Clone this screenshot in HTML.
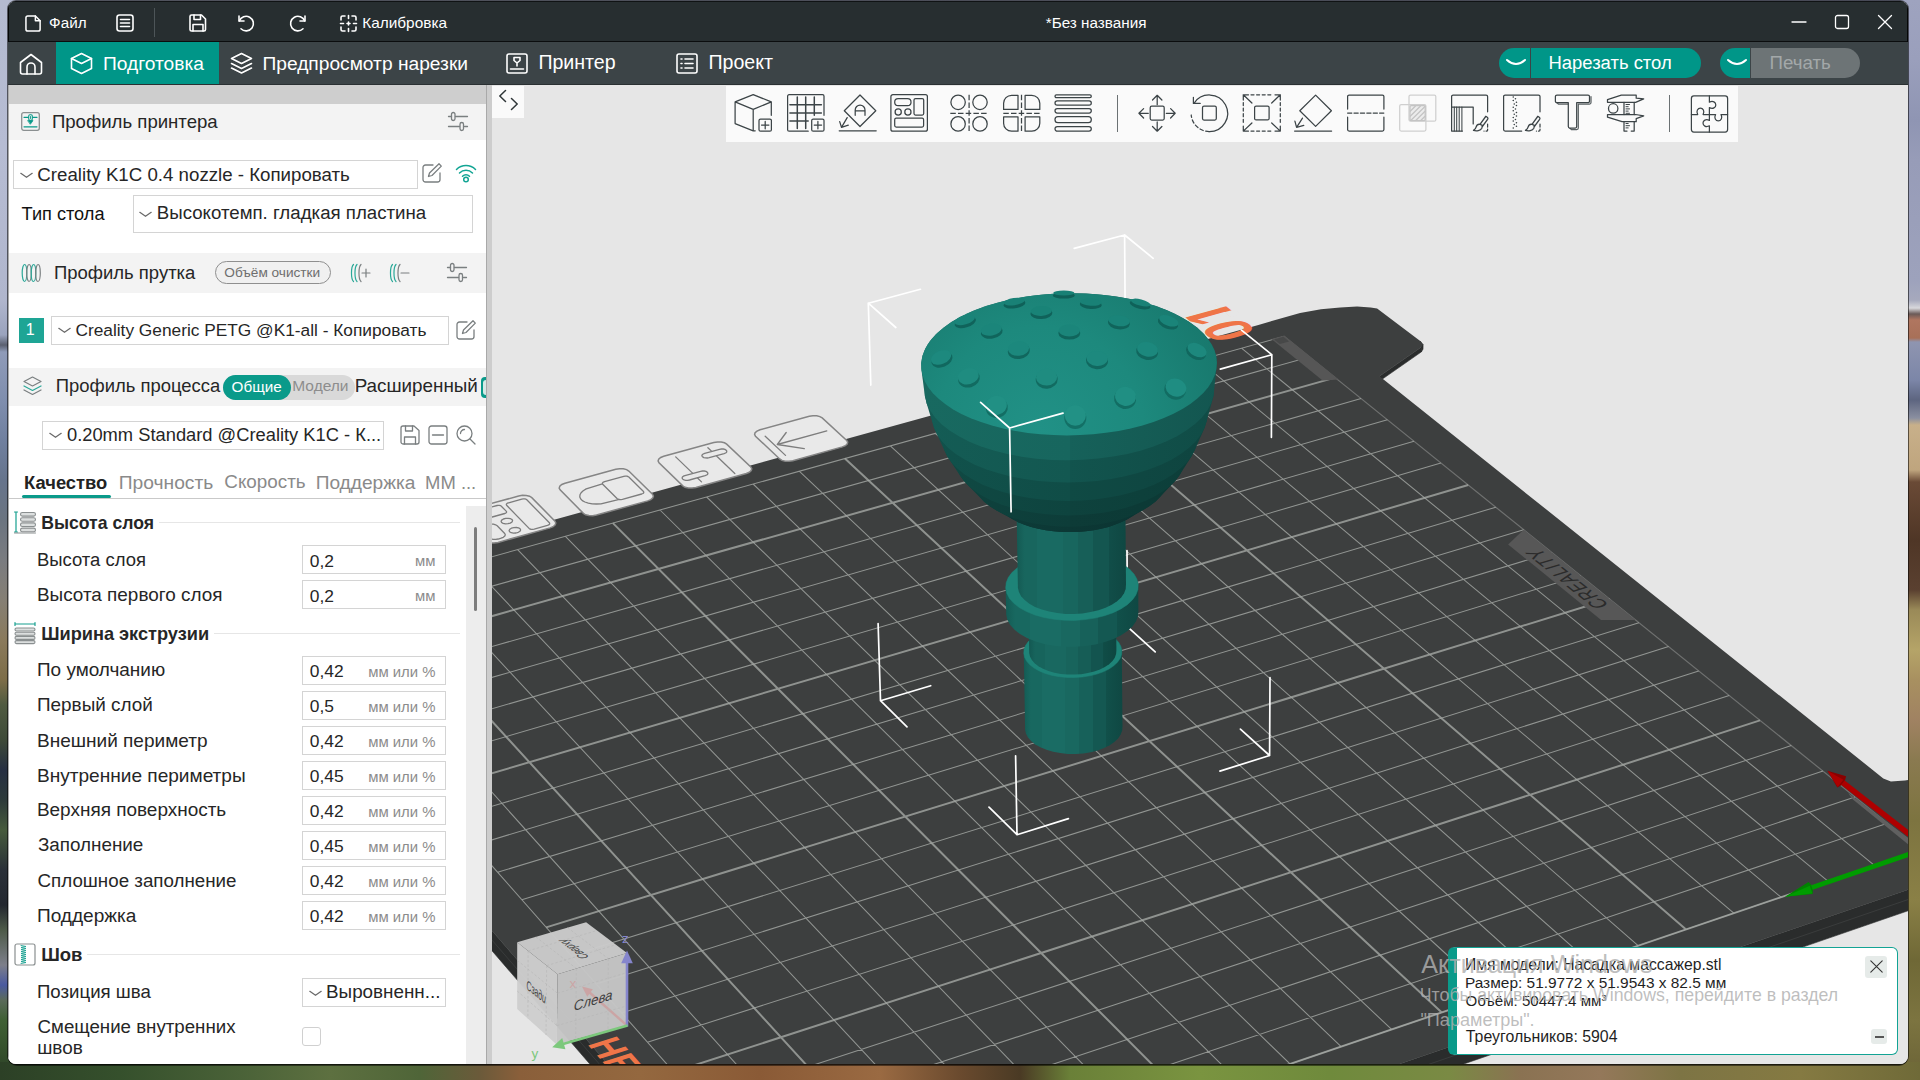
<!DOCTYPE html>
<html lang="ru"><head><meta charset="utf-8"><title>Creality Print</title>
<style>
*{box-sizing:border-box;margin:0;padding:0}
html,body{width:1920px;height:1080px;overflow:hidden}
body{font-family:"Liberation Sans",sans-serif;position:relative;background:#6b6a4a;color:#222}
.abs{position:absolute}
.t{position:absolute;white-space:nowrap;line-height:1}

#scene{position:absolute;left:484px;top:84px;width:1416px;height:979px;overflow:hidden;background:#e6e6e6}
#scene svg.main{position:absolute;left:0;top:0}

#tool{position:absolute;left:234px;top:1px;width:1012px;height:56px;background:#fafafa}
#tool svg{position:absolute;top:7.6px;overflow:visible}
#tool svg *{fill:none;stroke:#3c4447;stroke-width:1.25;stroke-linecap:round;stroke-linejoin:round;vector-effect:none}
#tool .sep{position:absolute;top:9px;width:1px;height:37px;background:#6b7173}
#info{position:absolute;left:956px;top:861.500px;width:450px;height:108px;background:#fff;border:1.5px solid #12a394;border-left:9.500px solid #0a9a8a;border-radius:6px}
#info .t{color:#1f1f1f}
#wm .t{color:rgba(176,176,176,.82)}

#panel{position:absolute;left:0;top:84px;width:478px;height:979px;background:#fff;overflow:hidden}
#panel .t{color:#262626}
.hdr{position:absolute;left:0;width:478px;background:#f3f3f3}
.box{position:absolute;border:1px solid #d4d4d4;background:#fff}
.ic.g *{fill:none;stroke:#7a7f80;stroke-width:1.300;stroke-linecap:round;stroke-linejoin:round}
.ic.k *{fill:none;stroke:#3c4447;stroke-width:1.200;stroke-linecap:round;stroke-linejoin:round}

#win{position:absolute;left:8px;top:1px;width:1900px;height:1063px;border-radius:8px;overflow:hidden;background:#e6e6e6;box-shadow:0 0 0 1px rgba(0,0,0,.55)}
#title{position:absolute;left:0;top:0;width:1900px;height:41px;background:#272e30;border-bottom:1px solid #0b0d0e;border-top:1px solid #101314}
#tabs{position:absolute;left:0;top:41px;width:1900px;height:43px;background:#3c4447;border-bottom:1px solid #2a3032}
.ic{position:absolute;overflow:visible}
.ic *{fill:none;stroke:#fff;stroke-width:1.6;stroke-linecap:round;stroke-linejoin:round}

</style></head><body>

<div class="abs" style="left:0;top:0;width:1920px;height:1080px;background:linear-gradient(90deg,#2c4026 0px,#35502c 120px,#4a6238 240px,#5d7040 330px,#4f6538 420px,#6b5a3a 480px,#8a5f3a 520px,#94683f 640px,#8a5a36 760px,#9a6a42 880px,#6a4a2e 960px,#4a3a24 1020px,#6a8038 1070px,#7a9440 1200px,#6f8a3c 1330px,#7a8a44 1450px,#8a7252 1520px,#94785a 1600px,#7d7444 1680px,#857a42 1800px,#6f6a38 1920px)"></div>
<div class="abs" style="left:0;top:0;width:1920px;height:24px;background:linear-gradient(90deg,#b4bad0 0,#a9aec6 50%,#9ea3bf 100%)"></div>
<div class="abs" style="left:0;top:0;width:30px;height:1080px;background:linear-gradient(180deg,#b4bad0 0px,#b6bcd3 150px,#b0b6cd 300px,#9aa3bd 335px,#5a6070 345px,#8f9bb8 352px,#7f8eae 400px,#70809f 440px,#66748c 480px,#6b7480 520px,#7a7c80 560px,#857f74 600px,#8a7a5c 640px,#7d6d48 680px,#4f5a40 705px,#3e4a38 740px,#262f42 770px,#2d3a3a 800px,#465a3c 830px,#2a3038 870px,#23272f 905px,#4d5a48 930px,#7d7f8a 965px,#4a5aa0 985px,#5a6a5a 1000px,#3f6034 1020px,#35502c 1050px,#2a3d26 1080px)"></div>
<div class="abs" style="left:1890px;top:0;width:30px;height:1080px;background:linear-gradient(180deg,#9ea3bf 0px,#9a9fbc 60px,#8f95b3 120px,#979cb8 160px,#9da2bc 280px,#a6a9bd 300px,#d8d8dc 308px,#6a5a58 314px,#b07660 320px,#a87058 338px,#8f95b0 342px,#7c86a8 380px,#5d6580 400px,#8a8fa0 418px,#c8b08a 425px,#bfa57e 470px,#6a4a36 482px,#4f3626 540px,#5a4030 590px,#9a8a58 610px,#b5a468 650px,#a89060 680px,#a08262 720px,#8a7a50 760px,#7d7440 820px,#8a8046 900px,#6f6836 960px,#7c7440 1020px,#6a6236 1080px)"></div>
<div class="abs" style="left:0;top:1062px;width:1920px;height:18px;background:linear-gradient(90deg,#2c4026 0px,#35502c 120px,#4a6238 240px,#5d7040 330px,#4f6538 420px,#6b5a3a 480px,#8a5f3a 520px,#94683f 640px,#8a5a36 760px,#9a6a42 880px,#6a4a2e 960px,#4a3a24 1020px,#6a8038 1070px,#7a9440 1200px,#6f8a3c 1330px,#7a8a44 1450px,#8a7252 1520px,#94785a 1600px,#7d7444 1680px,#857a42 1800px,#6f6a38 1920px)"></div>
<div class="abs" style="left:8px;top:1056px;width:1900px;height:10px;background:rgba(0,0,0,.5);border-radius:0 0 9px 9px"></div>

<div id="win">
<div id="title">
<div class="abs" style="left:0;top:0;width:1px;height:41px;background:#050606"></div><div class="abs" style="left:1899px;top:0;width:1px;height:41px;background:#050606"></div>
<svg class="ic" style="left:16.7px;top:12.5px" width="17" height="17" viewBox="0 0 18 18"><path d="M3 1h8l5 5v9a2 2 0 0 1-2 2H3a2 2 0 0 1-2-2V3a2 2 0 0 1 2-2z"/><path d="M11 1v5h5"/></svg>
<div class="t" style="top:12.71px;font-size:15.23px;left:41.12px;color:#fff;">Файл</div>
<svg class="ic" style="left:108px;top:12px" width="18" height="18" viewBox="0 0 18 18"><rect x="1" y="1" width="16" height="16" rx="2.5"/><path d="M4.5 5.5h9M4.5 9h9M4.5 12.5h9"/></svg>
<div class="abs" style="left:145.5px;top:6px;width:1px;height:29px;background:#4d5558"></div>
<svg class="ic" style="left:181px;top:12px" width="18" height="18" viewBox="0 0 18 18"><path d="M2.5 1h10l4 4v10.5a1.5 1.5 0 0 1-1.500 1.500H2.500A1.500 1.500 0 0 1 1 15.500V2.500A1.500 1.500 0 0 1 2.500 1z"/><path d="M5 1v4.500h6.500V1M4 17v-6.500h10V17"/></svg>
<svg class="ic" style="left:229px;top:12px" width="19" height="18" viewBox="0 0 19 18"><path d="M2 2v5h5"/><path d="M2.300 7A7.300 7.300 0 1 1 4 14.800"/></svg>
<svg class="ic" style="left:280px;top:12px" width="19" height="18" viewBox="0 0 19 18"><path d="M17 2v5h-5"/><path d="M16.700 7A7.300 7.300 0 1 0 15 14.800"/></svg>
<svg class="ic" style="left:332px;top:13px" width="17" height="17" viewBox="0 0 17 17"><path d="M1 5V2.500A1.500 1.500 0 0 1 2.500 1H5M12 1h2.500A1.500 1.500 0 0 1 16 2.500V5M16 12v2.500a1.500 1.500 0 0 1-1.500 1.500H12M5 16H2.500A1.500 1.500 0 0 1 1 14.500V12M8.500 .5v3M8.500 13.500v3M.5 8.500h3M13.500 8.500h3M8.500 7v3M7 8.500h3"/></svg>
<div class="t" style="top:12.58px;font-size:15.38px;left:354.24px;color:#fff;">Калибровка</div>
<div class="t" style="top:12.69px;font-size:15.25px;left:1037.75px;color:#fff;">*Без названия</div>
<svg class="ic" style="left:1782.5px;top:12.3px" width="16" height="16" viewBox="0 0 16 16"><path d="M1 8h14" style="stroke-width:1.300"/></svg>
<svg class="ic" style="left:1825.5px;top:12.3px" width="16" height="16" viewBox="0 0 16 16"><rect x="1.500" y="1.500" width="13" height="13" rx="2" style="stroke-width:1.300"/></svg>
<svg class="ic" style="left:1868.5px;top:12.3px" width="16" height="16" viewBox="0 0 16 16"><path d="M1.500 1.500l13 13M14.500 1.500l-13 13" style="stroke-width:1.300"/></svg>
</div>
<div id="tabs">
<div class="abs" style="left:48px;top:0;width:163px;height:42px;background:#009688"></div>
<svg class="ic" style="left:11px;top:11px" width="24" height="22" viewBox="0 0 24 22"><path d="M1.500 9.500L12 1.500l10.500 8V19a2 2 0 0 1-2 2H3.500a2 2 0 0 1-2-2z"/><path d="M8 21v-7a4 4 0 0 1 8 0v7" /></svg>
<svg class="ic" style="left:62px;top:10px" width="23" height="23" viewBox="0 0 23 23"><path d="M11.500 1.500L21.500 6.500v10L11.500 21.500 1.500 16.500v-10z"/><path d="M1.500 6.500l10 5 10-5"/></svg>
<div class="t" style="top:11.76px;font-size:19.19px;left:94.94px;color:#fff;">Подготовка</div>
<svg class="ic" style="left:222px;top:10px" width="23" height="23" viewBox="0 0 23 23"><path d="M11.500 1.500L21.500 6.500 11.500 11.500 1.500 6.500z"/><path d="M1.500 11.500l10 5 10-5M1.500 16l10 5 10-5"/></svg>
<div class="t" style="top:11.76px;font-size:19.19px;left:254.44px;color:#fff;">Предпросмотр нарезки</div>
<svg class="ic" style="left:498px;top:11px" width="22" height="21" viewBox="0 0 22 21"><rect x="1" y="1" width="20" height="19" rx="2"/><path d="M8 4.500h6v3l-3 2.500-3-2.500zM11 10v3M4.500 16h13"/></svg>
<div class="t" style="top:11.43px;font-size:19.57px;left:530.41px;color:#fff;">Принтер</div>
<svg class="ic" style="left:668px;top:11px" width="22" height="21" viewBox="0 0 22 21"><rect x="1" y="1" width="20" height="19" rx="2"/><path d="M5 6h1M9 6h8M5 10.500h1M9 10.500h8M5 15h1M9 15h8"/></svg>
<div class="t" style="top:11.38px;font-size:19.63px;left:700.41px;color:#fff;">Проект</div>
<div class="abs" style="left:1491px;top:6px;width:31px;height:30px;background:#009688;border-radius:15px 0 0 15px"></div>
<div class="abs" style="left:1523px;top:6px;width:170px;height:30px;background:#009688;border-radius:0 15px 15px 0"></div>
<svg class="ic" style="left:1498px;top:16px" width="20" height="10" viewBox="0 0 20 10"><path d="M1 2Q10 10 19 2" style="stroke-width:2"/></svg>
<div class="t" style="top:11.87px;font-size:18.46px;left:1540.49px;color:#fff;">Нарезать стол</div>
<div class="abs" style="left:1712px;top:6px;width:30px;height:30px;background:#009688;border-radius:15px 0 0 15px"></div>
<div class="abs" style="left:1743px;top:6px;width:109px;height:30px;background:#6d7476;border-radius:0 15px 15px 0"></div>
<svg class="ic" style="left:1719px;top:16px" width="20" height="10" viewBox="0 0 20 10"><path d="M1 2Q10 10 19 2" style="stroke-width:2"/></svg>
<div class="t" style="top:11.67px;font-size:18.7px;left:1761.48px;color:#a3a8a9;">Печать</div>
</div>
<div id="panel">
<div class="abs" style="left:0;top:0;width:1px;height:979px;background:#a9a9a9;z-index:3"></div>
<div class="abs" style="left:0;top:0;width:478px;height:19px;background:#cecece"></div>
<div class="hdr" style="top:19px;height:36px"></div>
<svg class="ic" style="left:13.399999999999999px;top:26.799999999999997px" width="19" height="19" viewBox="0 0 19 19"><rect x=".7" y=".7" width="17.600" height="17.600" rx="2" style="stroke:#8a8f90;stroke-width:1.300"/><path d="M3 5.300h13M3 14.800h13" style="stroke:#0a9a8a;stroke-width:1.200"/><rect x="7.700" y="2.700" width="3.600" height="5.600" rx="1.200" style="stroke:#0a9a8a;stroke-width:1.100;fill:#f3f3f3"/><path d="M7 8.600h5l-2.500 3.400z" style="stroke:#0a9a8a;stroke-width:.8;fill:#0a9a8a"/><path d="M9.500 4.500v2" style="stroke:#0a9a8a;stroke-width:.9"/></svg>
<div class="t" style="top:27.56px;font-size:18.6px;left:43.89px;">Профиль принтера</div>
<svg class="ic g" style="left:440px;top:26px" width="20" height="21" viewBox="0 0 20 21"><path d="M.5 5.500h3M7.500 5.500h12M.5 15.500h11M16.500 15.500h3"/><rect x="3.500" y="1.500" width="3.500" height="8" rx="1.750"/><rect x="12" y="11.500" width="3.500" height="8" rx="1.750"/></svg>
<div class="box" style="left:5px;top:75px;width:405px;height:29px"></div>
<svg class="ic" style="left:12px;top:87px" width="13" height="7" viewBox="0 0 13 7"><path d="M.8 1.300L6.500 5.300 12.200 1.300" style="stroke:#6a6a6a;stroke-width:1.250"/></svg>
<div class="t" style="top:80.85px;font-size:18.72px;left:29.35px;">Creality K1C 0.4 nozzle - Копировать</div>
<svg class="ic g" style="left:414px;top:78px" width="20" height="20" viewBox="0 0 20 20"><path d="M11 2H3.500A2.500 2.500 0 0 0 1 4.500v12A2.500 2.500 0 0 0 3.500 19h12a2.500 2.500 0 0 0 2.500-2.500V10"/><path d="M6.500 13.500l1-3.500L17 .8l2.300 2.300-9.300 9.400z"/></svg>
<svg class="ic" style="left:447px;top:78px" width="22" height="20" viewBox="0 0 22 20"><path d="M1.500 6.500a13.500 13.500 0 0 1 19 0M4.500 10a9.300 9.300 0 0 1 13 0M7.500 13.300a5 5 0 0 1 7 0" style="stroke:#12a594;stroke-width:1.500"/><circle cx="11" cy="16.500" r="2.300" style="stroke:#12a594;stroke-width:1.500"/></svg>
<div class="t" style="top:119.81px;font-size:18.18px;left:13.59px;color:#111;">Тип стола</div>
<div class="box" style="left:125px;top:110px;width:340px;height:38px"></div>
<svg class="ic" style="left:131px;top:126px" width="13" height="7" viewBox="0 0 13 7"><path d="M.8 1.300L6.500 5.300 12.200 1.300" style="stroke:#6a6a6a;stroke-width:1.250"/></svg>
<div class="t" style="top:119.39px;font-size:18.68px;left:148.77px;">Высокотемп. гладкая пластина</div>
<div class="hdr" style="top:168px;height:40px"></div>
<svg class="ic" style="left:13px;top:178px" width="20" height="20" viewBox="0 0 20 20"><ellipse cx="3.500" cy="10" rx="2.300" ry="8.500" style="stroke:#2aa898;stroke-width:1.200"/><ellipse cx="8" cy="10" rx="2.300" ry="8.500" style="stroke:#7a7f80;stroke-width:1.200"/><ellipse cx="12.500" cy="10" rx="2.300" ry="8.500" style="stroke:#2aa898;stroke-width:1.200"/><ellipse cx="17" cy="10" rx="2.300" ry="8.500" style="stroke:#7a7f80;stroke-width:1.200"/></svg>
<div class="t" style="top:178.66px;font-size:18.48px;left:46.00px;">Профиль прутка</div>
<div class="abs" style="left:207px;top:176px;width:116px;height:23px;border:1px solid #8f8f8f;border-radius:12px;background:#f0f0f0"></div>
<div class="t" style="top:180.66px;font-size:13.63px;left:216.35px;color:#6e6e6e;">Объём очистки</div>
<svg class="ic" style="left:342px;top:178px" width="21" height="20" viewBox="0 0 21 20"><path d="M3.500 1.500C.8 4 .8 16 3.500 18.500M7 1.500C4.300 4 4.300 16 7 18.500" style="stroke:#2aa898;stroke-width:1.200"/><path d="M11 1.500C8.300 4 8.300 16 11 18.500M12 10h8M16 6v8" style="stroke:#7a7f80;stroke-width:1.200"/></svg>
<svg class="ic" style="left:381px;top:178px" width="21" height="20" viewBox="0 0 21 20"><path d="M3.500 1.500C.8 4 .8 16 3.500 18.500M7 1.500C4.300 4 4.300 16 7 18.500" style="stroke:#2aa898;stroke-width:1.200"/><path d="M11 1.500C8.300 4 8.300 16 11 18.500M12 10h8" style="stroke:#7a7f80;stroke-width:1.200"/></svg>
<svg class="ic g" style="left:439px;top:177px" width="20" height="21" viewBox="0 0 20 21"><path d="M.5 5.500h3M7.500 5.500h12M.5 15.500h11M16.500 15.500h3"/><rect x="3.500" y="1.500" width="3.500" height="8" rx="1.750"/><rect x="12" y="11.500" width="3.500" height="8" rx="1.750"/></svg>
<div class="abs" style="left:11px;top:233px;width:25px;height:25px;background:#1ea595"></div>
<div class="t" style="top:237.46px;font-size:16px;left:17.78px;color:#fff;">1</div>
<div class="box" style="left:43px;top:231px;width:398px;height:29px"></div>
<svg class="ic" style="left:50px;top:242px" width="13" height="7" viewBox="0 0 13 7"><path d="M.8 1.300L6.500 5.300 12.200 1.300" style="stroke:#6a6a6a;stroke-width:1.250"/></svg>
<div class="t" style="top:236.75px;font-size:17.31px;left:67.42px;">Creality Generic PETG @K1-all - Копировать</div>
<svg class="ic g" style="left:447.5px;top:235px" width="20" height="20" viewBox="0 0 20 20"><path d="M11 2H3.500A2.500 2.500 0 0 0 1 4.500v12A2.500 2.500 0 0 0 3.500 19h12a2.500 2.500 0 0 0 2.500-2.500V10"/><path d="M6.500 13.500l1-3.500L17 .8l2.300 2.300-9.300 9.400z"/></svg>
<div class="hdr" style="top:283px;height:38px"></div>
<svg class="ic" style="left:15px;top:291px" width="19" height="20" viewBox="0 0 19 20"><path d="M9.500 1L18 5.500 9.500 10 1 5.500z" style="stroke:#7a7f80;stroke-width:1.200"/><path d="M1 10l8.500 4.500L18 10" style="stroke:#2aa898;stroke-width:1.200"/><path d="M1 14l8.500 4.500L18 14" style="stroke:#7a7f80;stroke-width:1.200"/></svg>
<div class="t" style="top:292.27px;font-size:18.47px;left:47.80px;">Профиль процесса</div>
<div class="abs" style="left:215px;top:289.5px;width:132px;height:25px;border-radius:12.500px;background:#d9d9d9"></div>
<div class="abs" style="left:215px;top:289.5px;width:68px;height:25px;border-radius:12.500px;background:#0a9a8a"></div>
<div class="t" style="top:293.70px;font-size:15.24px;left:223.58px;color:#fff;">Общие</div>
<div class="t" style="top:293.45px;font-size:15.54px;left:284.23px;color:#8d8d8d;">Модели</div>
<div class="t" style="top:291.96px;font-size:18.83px;left:346.66px;">Расширенный</div>
<div class="abs" style="left:473px;top:292px;width:30px;height:21px;border-radius:4px;background:#0a9a8a"></div>
<div class="abs" style="left:475px;top:295px;width:10px;height:15px;border-radius:3px;background:#d5e9e6"></div>
<div class="box" style="left:34px;top:336px;width:342px;height:29px"></div>
<svg class="ic" style="left:41px;top:347px" width="13" height="7" viewBox="0 0 13 7"><path d="M.8 1.300L6.500 5.300 12.200 1.300" style="stroke:#6a6a6a;stroke-width:1.250"/></svg>
<div class="t" style="top:341.09px;font-size:18.32px;left:58.98px;">0.20mm Standard @Creality K1C - К...</div>
<svg class="ic g" style="left:391.5px;top:339.5px" width="20" height="20" viewBox="0 0 20 20"><path d="M3 1h11l5 4.500V17a2 2 0 0 1-2 2H3a2 2 0 0 1-2-2V3a2 2 0 0 1 2-2z"/><path d="M5.500 1v5h7V1M4.500 19v-7h11v7"/></svg>
<svg class="ic g" style="left:419.5px;top:339.5px" width="20" height="20" viewBox="0 0 20 20"><rect x="1" y="1" width="18" height="18" rx="2.500"/><path d="M4.500 10h11"/></svg>
<svg class="ic g" style="left:448px;top:339.5px" width="20" height="20" viewBox="0 0 20 20"><circle cx="8.500" cy="8.500" r="7.500"/><path d="M14 14l5 5"/><path d="M4.500 8.500a4 4 0 0 1 4-4"/></svg>
<div class="t" style="top:388.67px;font-size:18.35px;left:16.07px;font-weight:bold;color:#222;">Качество</div>
<div class="t" style="top:387.91px;font-size:19.24px;left:110.74px;color:#8a8a8a;">Прочность</div>
<div class="t" style="top:388.25px;font-size:18.84px;left:216.34px;color:#8a8a8a;">Скорость</div>
<div class="t" style="top:388.01px;font-size:19.12px;left:307.65px;color:#8a8a8a;">Поддержка</div>
<div class="t" style="top:388.60px;font-size:18.43px;left:417.09px;color:#8a8a8a;">ММ ...</div>
<div class="abs" style="left:0;top:413px;width:478px;height:1px;background:#c9c9c9"></div>
<div class="abs" style="left:14px;top:410px;width:89px;height:3px;border-radius:1.500px;background:#0a9a8a"></div>
<div class="abs" style="left:458px;top:420.5px;width:20px;height:560px;background:#ededed"></div>
<div class="abs" style="left:466px;top:442px;width:3px;height:84px;border-radius:1.500px;background:#7d7d7d"></div>
<div class="t" style="top:429.79px;font-size:17.61px;left:33.22px;font-weight:bold;">Высота слоя</div><div class="abs" style="left:151px;top:437.29999999999995px;width:301px;height:1px;background:#e6e6e6"></div><svg class="ic" style="left:6px;top:426.29999999999995px" width="22" height="23" viewBox="0 0 22 23"><rect x="6.500" y="1.5" width="15" height="3.600" rx="1.800" style="stroke:#8a8f90;stroke-width:1.100;fill:#dcdfdf"/><rect x="6.500" y="6.7" width="15" height="3.600" rx="1.800" style="stroke:#8a8f90;stroke-width:1.100;fill:#dcdfdf"/><rect x="6.500" y="11.9" width="15" height="3.600" rx="1.800" style="stroke:#8a8f90;stroke-width:1.100;fill:#dcdfdf"/><rect x="6.500" y="17.1" width="15" height="3.600" rx="1.800" style="stroke:#8a8f90;stroke-width:1.100;fill:#dcdfdf"/><path d="M2 1v20M.5 1h3M.5 21h3" style="stroke:#17a090;stroke-width:1.200"/><path d="M.5 22h21" style="stroke:#8a8f90;stroke-width:1"/></svg>
<div class="t" style="top:539.99px;font-size:18.21px;left:33.18px;font-weight:bold;">Ширина экструзии</div><div class="abs" style="left:206px;top:548px;width:246px;height:1px;background:#e6e6e6"></div><svg class="ic" style="left:6px;top:537px" width="22" height="23" viewBox="0 0 22 23"><rect x="1" y="6.0" width="20" height="3" rx="1.500" style="stroke:#8a8f90;stroke-width:1.100;fill:#dcdfdf"/><rect x="1" y="10.2" width="20" height="3" rx="1.500" style="stroke:#8a8f90;stroke-width:1.100;fill:#dcdfdf"/><rect x="1" y="14.4" width="20" height="3" rx="1.500" style="stroke:#8a8f90;stroke-width:1.100;fill:#dcdfdf"/><rect x="1" y="18.6" width="20" height="3" rx="1.500" style="stroke:#8a8f90;stroke-width:1.100;fill:#dcdfdf"/><path d="M1 2h20M1 .5v3M21 .5v3" style="stroke:#17a090;stroke-width:1.200"/></svg>
<div class="t" style="top:860.74px;font-size:18.5px;left:33.16px;font-weight:bold;">Шов</div><div class="abs" style="left:79px;top:869px;width:373px;height:1px;background:#e6e6e6"></div><svg class="ic" style="left:6px;top:858px" width="22" height="23" viewBox="0 0 22 23"><rect x="1" y="1" width="20" height="21" rx="2" style="stroke:#8a8f90;stroke-width:1.200"/><path d="M7 2.500l5 1l-5 1l5 1l-5 1l5 1l-5 1l5 1l-5 1l5 1l-5 1l5 1l-5 1l5 1l-5 1l5 1l-5 1l5 1l-5 1" style="stroke:#17a090;stroke-width:.9;stroke-linejoin:miter"/></svg>
<div class="t" style="top:466.06px;font-size:18.48px;left:28.98px;">Высота слоя</div><div class="box" style="left:294px;top:460.20000000000005px;width:144px;height:29px"></div><div class="t" style="top:467.57px;font-size:17.4px;left:301.72px;">0,2</div><div class="t" style="top:469.09px;font-size:14.9px;right:50.5px;color:#8c8c8c;">мм</div>
<div class="t" style="top:500.68px;font-size:18.92px;left:28.95px;">Высота первого слоя</div><div class="box" style="left:294px;top:495.20000000000005px;width:144px;height:29px"></div><div class="t" style="top:502.57px;font-size:17.4px;left:301.72px;">0,2</div><div class="t" style="top:504.09px;font-size:14.9px;right:50.5px;color:#8c8c8c;">мм</div>
<div class="t" style="top:576.34px;font-size:18.97px;left:28.96px;">По умолчанию</div><div class="box" style="left:294px;top:570.9px;width:144px;height:29px"></div><div class="t" style="top:578.27px;font-size:17.4px;left:301.72px;">0,42</div><div class="t" style="top:579.79px;font-size:14.9px;right:50.5px;color:#8c8c8c;">мм или %</div>
<div class="t" style="top:611.39px;font-size:18.91px;left:28.97px;">Первый слой</div><div class="box" style="left:294px;top:605.9px;width:144px;height:29px"></div><div class="t" style="top:613.27px;font-size:17.4px;left:301.72px;">0,5</div><div class="t" style="top:614.79px;font-size:14.9px;right:50.5px;color:#8c8c8c;">мм или %</div>
<div class="t" style="top:646.27px;font-size:19.05px;left:28.94px;">Внешний периметр</div><div class="box" style="left:294px;top:640.9px;width:144px;height:29px"></div><div class="t" style="top:648.27px;font-size:17.4px;left:301.72px;">0,42</div><div class="t" style="top:649.79px;font-size:14.9px;right:50.5px;color:#8c8c8c;">мм или %</div>
<div class="t" style="top:681.25px;font-size:19.08px;left:28.93px;">Внутренние периметры</div><div class="box" style="left:294px;top:675.9px;width:144px;height:29px"></div><div class="t" style="top:683.27px;font-size:17.4px;left:301.72px;">0,45</div><div class="t" style="top:684.79px;font-size:14.9px;right:50.5px;color:#8c8c8c;">мм или %</div>
<div class="t" style="top:716.34px;font-size:18.97px;left:28.94px;">Верхняя поверхность</div><div class="box" style="left:294px;top:710.9px;width:144px;height:29px"></div><div class="t" style="top:718.27px;font-size:17.4px;left:301.72px;">0,42</div><div class="t" style="top:719.79px;font-size:14.9px;right:50.5px;color:#8c8c8c;">мм или %</div>
<div class="t" style="top:751.44px;font-size:18.85px;left:29.88px;">Заполнение</div><div class="box" style="left:294px;top:745.9px;width:144px;height:29px"></div><div class="t" style="top:753.27px;font-size:17.4px;left:301.72px;">0,45</div><div class="t" style="top:754.79px;font-size:14.9px;right:50.5px;color:#8c8c8c;">мм или %</div>
<div class="t" style="top:786.52px;font-size:18.76px;left:29.55px;">Сплошное заполнение</div><div class="box" style="left:294px;top:780.9px;width:144px;height:29px"></div><div class="t" style="top:788.27px;font-size:17.4px;left:301.72px;">0,42</div><div class="t" style="top:789.79px;font-size:14.9px;right:50.5px;color:#8c8c8c;">мм или %</div>
<div class="t" style="top:821.27px;font-size:19.06px;left:28.96px;">Поддержка</div><div class="box" style="left:294px;top:815.9px;width:144px;height:29px"></div><div class="t" style="top:823.27px;font-size:17.4px;left:301.72px;">0,42</div><div class="t" style="top:824.79px;font-size:14.9px;right:50.5px;color:#8c8c8c;">мм или %</div>
<div class="t" style="top:897.92px;font-size:18.64px;left:28.99px;">Позиция шва</div>
<div class="box" style="left:294px;top:892.5px;width:144px;height:29px"></div>
<svg class="ic" style="left:300.5px;top:904.5px" width="13" height="7" viewBox="0 0 13 7"><path d="M.8 1.300L6.500 5.300 12.200 1.300" style="stroke:#6a6a6a;stroke-width:1.250"/></svg>
<div class="t" style="top:897.75px;font-size:18.84px;left:318.05px;">Выровненн...</div>
<div class="t" style="top:933.15px;font-size:18.72px;left:29.55px;">Смещение внутренних</div>
<div class="t" style="top:954.18px;font-size:18.93px;left:29.19px;">швов</div>
<div class="abs" style="left:294px;top:941.5px;width:19px;height:19px;border:1px solid #d0d0d0;border-radius:3px;background:#fff"></div>
</div>
<div class="abs" style="left:478px;top:84px;width:1px;height:979px;background:#a9a9a9"></div>
<div class="abs" style="left:479px;top:84px;width:5px;height:979px;background:#cdcdcd"></div>
<div id="scene"><svg class="main" width="1416" height="979" viewBox="492 85 1416 979"><polygon points="1420.2,341.0 1422.9,344.4 1422.8,349.2 1420.1,345.8" fill="#2a2c2c" stroke="#2a2c2c" stroke-width="0.6"/>
<polygon points="1422.9,344.4 1421.6,347.0 1421.5,351.8 1422.8,349.2" fill="#2a2c2c" stroke="#2a2c2c" stroke-width="0.6"/>
<polygon points="1421.6,347.0 1379.5,376.3 1379.5,381.1 1421.5,351.8" fill="#2a2c2c" stroke="#2a2c2c" stroke-width="0.6"/>
<polygon points="2043.0,830.8 2038.3,845.0 2037.9,850.3 2042.6,836.1" fill="#2a2c2c" stroke="#2a2c2c" stroke-width="0.6"/>
<polygon points="2038.3,845.0 789.4,1273.3 790.4,1296.2 2036.7,866.4" fill="#2a2c2c" stroke="#2a2c2c" stroke-width="0.6"/>
<polygon points="789.4,1273.3 216.3,613.2 218.2,633.9 790.4,1296.2" fill="#2a2c2c" stroke="#2a2c2c" stroke-width="0.6"/>
<polygon points="216.3,613.2 1258.4,324.9 1300.1,312.9 1321.0,309.2 1340.2,307.5 1357.1,306.6 1370.6,307.4 1377.1,308.6 1420.2,341.0 1422.9,344.4 1421.6,347.0 1379.5,376.3 1883.3,778.4 1890.9,781.4 1905.0,780.4 1966.5,770.8 2043.0,830.8 2038.3,845.0 789.4,1273.3" fill="#3d3f3f"/>
<path d="M2037.6,855.0 L789.9,1284.0 M789.9,1284.0 L217.2,622.9" stroke="#3a3c3c" stroke-width="1" fill="none"/>
<path d="M1920.5,849.8 L1284.0,336.4" stroke="#6f7170" stroke-width="1.2" fill="none"/>
<path d="M1920.5,849.8 L810.4,1226.9 M1887.5,823.2 L782.3,1195.0 M1874.4,865.4 L1241.5,348.2 M1855.0,797.0 L754.6,1163.6 M1827.9,881.2 L1198.7,360.1 M1823.0,771.1 L727.2,1132.6 M1781.0,897.2 L1155.6,372.1 M1791.3,745.6 L700.3,1102.0 M1733.8,913.2 L1112.2,384.2 M1729.2,695.5 L647.5,1042.2 M1638.1,945.7 L1024.4,408.6 M1698.7,670.9 L621.6,1012.9 M1589.6,962.2 L980.0,420.9 M1668.6,646.6 L596.2,984.0 M1540.8,978.8 L935.3,433.4 M1638.9,622.7 L571.0,955.5 M1491.5,995.5 L890.3,445.9 M1580.6,575.6 L521.8,899.7 M1391.6,1029.4 L799.2,471.2 M1552.0,552.5 L497.6,872.3 M1341.1,1046.6 L753.1,484.0 M1523.7,529.7 L473.8,845.3 M1290.1,1064.0 L706.7,497.0 M1495.8,507.2 L450.3,818.7 M1238.6,1081.4 L660.0,510.0 M1440.9,463.0 L404.3,766.4 M1134.4,1116.8 L565.4,536.3 M1414.0,441.2 L381.7,740.8 M1081.6,1134.8 L517.6,549.6 M1387.4,419.8 L359.4,715.5 M1028.3,1152.9 L469.4,563.0 M1361.1,398.6 L337.4,690.6 M974.6,1171.1 L420.9,576.5 M1309.4,356.9 L294.2,641.6 M865.6,1208.2 L322.7,603.8 M1284.0,336.4 L273.0,617.6 M810.4,1226.9 L273.0,617.6" stroke="#a4a7a4" stroke-width="1.05" fill="none" opacity=".82"/>
<path d="M1760.0,720.4 L673.7,1071.9 M1686.1,929.4 L1068.4,396.3 M1609.6,599.0 L546.2,927.4 M1441.8,1012.4 L844.9,458.5 M1468.2,485.0 L427.1,792.4 M1186.7,1099.1 L612.9,523.1 M1335.1,377.6 L315.6,666.0 M920.3,1189.6 L372.0,590.1 M1920.5,849.8 L810.4,1226.9" stroke="#a4a7a4" stroke-width="2" fill="none" opacity=".8"/>
<polygon points="1271.4,339.1 1284.3,335.5 1338.7,379.4 1322.6,380.6" fill="#565656"/>
<polygon points="1274.1,339.4 1283.4,336.8 1289.2,341.5 1279.9,344.1" fill="#474848"/>
<polygon points="1523.7,529.7 1508.1,544.4 1601.1,619.9 1635.7,620.0" fill="#575757"/>
<text transform="matrix(-2.8793 -2.3263 4.4150 -1.3520 1609.65 605.23)" x="0" y="0" font-family="Liberation Sans, sans-serif" font-size="4.7" letter-spacing="0.22" fill="#2b2b2b" >CREALITY</text>
<text transform="matrix(-2.4827 -2.0121 4.2266 -1.1637 1258.58 332.39)" x="0" y="0" font-family="Liberation Sans, sans-serif" font-size="14" font-weight="bold" fill="#ef7548" >01</text>
<polygon points="1240.8,314.8 1234.2,309.5 1224.4,312.2 1231.0,317.5" fill="#e6e6e6"/>
<polygon points="1229.2,305.4 1222.8,300.2 1213.0,302.9 1219.4,308.1" fill="#e6e6e6"/>
<text transform="matrix(2.5770 2.9712 -5.4264 1.7392 586.99 1044.10)" x="0" y="0" font-family="Liberation Sans, sans-serif" font-size="7.6" font-weight="bold" fill="#ef7548" >HE</text>
<path d="M518.7 496.0 L522.4 495.3 L526.3 495.4 L529.5 496.2 L531.8 497.6 L555.0 521.2 L555.8 523.0 L555.2 524.9 L553.1 526.7 L550.0 527.9 L498.0 542.4 L494.2 543.0 L490.3 542.9 L487.0 542.1 L484.8 540.7 L461.9 516.8 L461.1 515.0 L461.7 513.1 L463.8 511.4 L467.0 510.1Z M615.8 469.3 L619.5 468.7 L623.3 468.8 L626.6 469.6 L628.8 471.0 L652.5 494.3 L653.4 496.0 L652.8 497.9 L650.8 499.6 L647.7 500.9 L596.5 515.0 L592.8 515.7 L588.9 515.6 L585.6 514.8 L583.4 513.4 L560.1 489.8 L559.2 488.1 L559.8 486.2 L561.8 484.5 L565.0 483.3Z M713.8 442.5 L717.5 441.9 L721.2 442.0 L724.5 442.8 L726.7 444.1 L750.8 467.0 L751.8 468.8 L751.2 470.6 L749.3 472.3 L746.3 473.5 L695.9 487.5 L692.2 488.1 L688.4 488.0 L685.1 487.3 L682.8 485.9 L659.0 462.7 L658.1 461.0 L658.7 459.1 L660.7 457.5 L663.7 456.2Z M809.3 416.3 L812.9 415.7 L816.7 415.8 L819.9 416.6 L822.2 417.9 L846.7 440.5 L847.7 442.2 L847.2 444.0 L845.3 445.7 L842.3 446.9 L792.8 460.7 L789.1 461.3 L785.3 461.2 L782.0 460.4 L779.7 459.0 L755.5 436.2 L754.6 434.5 L755.1 432.7 L757.0 431.1 L760.0 429.8Z" fill="#e9e9e9" stroke="#858585" stroke-width="1.5"/>
<path d="M765.2 436.3 L785.5 455.4 M777.3 444.5 L826.8 430.9 M786.2 432.5 L777.3 444.5 L804.3 448.6 M675.7 456.9 L692.8 473.4 M697.3 477.8 L701.5 481.9 M700.6 471.3 L702.5 471.0 L704.3 471.0 L706.0 471.4 L707.1 472.1 L707.5 472.4 L707.9 473.3 L707.6 474.2 L706.7 475.0 L705.1 475.7 L689.5 480.0 L687.6 480.3 L685.7 480.3 L684.1 479.9 L682.9 479.2 L682.6 478.9 L682.1 478.0 L682.4 477.1 L683.4 476.2 L684.9 475.6Z M707.9 447.7 L711.8 451.4 M716.3 455.7 L734.8 473.5 M719.5 449.3 L721.4 449.0 L723.3 449.0 L724.9 449.4 L726.0 450.1 L726.4 450.4 L726.8 451.2 L726.6 452.2 L725.6 453.0 L724.1 453.6 L709.2 457.7 L707.4 458.0 L705.5 457.9 L703.8 457.6 L702.7 456.9 L702.4 456.6 L701.9 455.7 L702.2 454.8 L703.2 454.0 L704.7 453.3Z M623.8 476.4 L625.2 476.1 L626.7 476.2 L627.9 476.5 L628.8 477.0 L643.5 491.5 L643.8 492.2 L643.6 492.9 L642.9 493.5 L641.7 494.0 L622.4 499.3 L620.9 499.6 L619.5 499.5 L618.2 499.2 L617.3 498.7 L602.7 484.2 L602.4 483.5 L602.6 482.8 L603.4 482.1 L604.6 481.6Z M602.4 483.8 L586.2 488.9 L583.2 490.7 L581.1 492.7 L580.0 494.8 L579.8 496.9 L580.6 498.8 L582.3 500.6 L584.9 502.0 L588.3 503.1 L592.2 503.8 L596.5 504.0 L601.0 503.8 L618.3 499.7 M521.8 499.1 L523.2 498.9 L524.7 498.9 L526.0 499.2 L526.8 499.8 L549.4 522.8 L549.7 523.5 L549.5 524.2 L548.7 524.9 L547.5 525.4 L534.2 529.1 L532.7 529.3 L531.2 529.3 L529.9 529.0 L529.1 528.4 L506.6 505.3 L506.3 504.6 L506.5 503.9 L507.3 503.2 L508.6 502.8Z M512.1 519.6 L512.6 520.8 L512.0 522.0 L510.3 523.1 L508.0 523.7 L505.4 523.9 L503.1 523.4 L501.6 522.5 L501.1 521.3 L501.7 520.1 L503.4 519.0 L505.7 518.4 L508.3 518.3 L510.6 518.7Z M520.1 528.8 L520.6 530.0 L520.0 531.3 L518.3 532.3 L516.0 533.0 L513.4 533.1 L511.2 532.7 L509.6 531.7 L509.1 530.5 L509.8 529.3 L511.4 528.2 L513.8 527.6 L516.3 527.5 L518.6 527.9Z M497.1 505.5 L498.2 505.3 L499.4 505.3 L500.4 505.6 L501.1 506.0 L506.4 511.4 L506.6 512.0 L506.4 512.6 L505.8 513.1 L504.8 513.5 L492.2 517.0 L491.1 517.2 L489.9 517.1 L488.9 516.9 L488.2 516.4 L482.9 511.0 L482.7 510.5 L482.9 509.9 L483.5 509.3 L484.5 509.0Z M488.1 524.6 L490.7 524.2 L493.4 524.2 L495.6 524.8 L497.2 525.8 L504.7 533.5 L505.3 534.8 L504.8 536.1 L503.3 537.3 L501.1 538.2 L498.3 539.0 L495.7 539.4 L493.0 539.4 L490.7 538.8 L489.2 537.8 L481.7 530.0 L481.1 528.8 L481.6 527.5 L483.0 526.3 L485.3 525.4Z" fill="none" stroke="#7d7d7d" stroke-width="1.3" stroke-linecap="round" stroke-linejoin="round"/>
<polygon points="1848.3,793.0 1852.0,798.8 1912.0,847.5 1912.0,840.8" fill="#606060"/>
<path d="M1925.0 846.5 L1841.7 781.8" stroke="#ad0000" stroke-width="5.6" fill="none"/><polygon points="1827.5,770.8 1846.1,776.2 1845.1,779.9 1840.7,785.6 1837.3,787.5" fill="#8a0000"/><polygon points="1827.5,770.8 1843.3,779.8 1837.7,787.0" fill="#ad0000"/>
<path d="M1925.0 848.8 L1810.5 888.0" stroke="#009c00" stroke-width="4.8" fill="none"/><polygon points="1785.0,896.7 1808.5,881.9 1810.9,884.4 1813.0,890.5 1812.6,894.0" fill="#008300"/><polygon points="1785.0,896.7 1809.8,885.8 1812.4,893.4" fill="#009c00"/>
<defs><linearGradient id="gc1" gradientUnits="userSpaceOnUse" x1="1024" y1="0" x2="1122" y2="0"><stop offset="0" stop-color="#145c55"/><stop offset="0.07" stop-color="#186860"/><stop offset="0.18" stop-color="#186860"/><stop offset="0.18" stop-color="#1a6c64"/><stop offset="0.42" stop-color="#1a6c64"/><stop offset="0.42" stop-color="#196860"/><stop offset="0.56" stop-color="#196860"/><stop offset="0.56" stop-color="#17615a"/><stop offset="0.7" stop-color="#17615a"/><stop offset="0.7" stop-color="#145852"/><stop offset="0.84" stop-color="#145852"/><stop offset="0.84" stop-color="#11504a"/><stop offset="1" stop-color="#0f4843"/></linearGradient><linearGradient id="gc2" gradientUnits="userSpaceOnUse" x1="1029" y1="0" x2="1117" y2="0"><stop offset="0" stop-color="#135852"/><stop offset="0.07" stop-color="#17645c"/><stop offset="0.18" stop-color="#17645c"/><stop offset="0.18" stop-color="#196860"/><stop offset="0.42" stop-color="#196860"/><stop offset="0.42" stop-color="#18645c"/><stop offset="0.56" stop-color="#18645c"/><stop offset="0.56" stop-color="#165d56"/><stop offset="0.7" stop-color="#165d56"/><stop offset="0.7" stop-color="#13544f"/><stop offset="0.84" stop-color="#13544f"/><stop offset="0.84" stop-color="#104d47"/><stop offset="1" stop-color="#0e4540"/></linearGradient><linearGradient id="gc3" gradientUnits="userSpaceOnUse" x1="1006" y1="0" x2="1138" y2="0"><stop offset="0" stop-color="#145c55"/><stop offset="0.07" stop-color="#186860"/><stop offset="0.18" stop-color="#186860"/><stop offset="0.18" stop-color="#1a6c64"/><stop offset="0.42" stop-color="#1a6c64"/><stop offset="0.42" stop-color="#196860"/><stop offset="0.56" stop-color="#196860"/><stop offset="0.56" stop-color="#17615a"/><stop offset="0.7" stop-color="#17615a"/><stop offset="0.7" stop-color="#145852"/><stop offset="0.84" stop-color="#145852"/><stop offset="0.84" stop-color="#11504a"/><stop offset="1" stop-color="#0f4843"/></linearGradient><linearGradient id="gc4" gradientUnits="userSpaceOnUse" x1="1017" y1="0" x2="1126" y2="0"><stop offset="0" stop-color="#145a53"/><stop offset="0.07" stop-color="#18665e"/><stop offset="0.18" stop-color="#18665e"/><stop offset="0.18" stop-color="#196a62"/><stop offset="0.42" stop-color="#196a62"/><stop offset="0.42" stop-color="#18665e"/><stop offset="0.56" stop-color="#18665e"/><stop offset="0.56" stop-color="#175f58"/><stop offset="0.7" stop-color="#175f58"/><stop offset="0.7" stop-color="#145650"/><stop offset="0.84" stop-color="#145650"/><stop offset="0.84" stop-color="#114e49"/><stop offset="1" stop-color="#0f4742"/></linearGradient><linearGradient id="gb0" gradientUnits="userSpaceOnUse" x1="921" y1="0" x2="1218" y2="0"><stop offset="0" stop-color="#0d3c38"/><stop offset=".5" stop-color="#0b3431"/><stop offset=".5" stop-color="#0b3330"/><stop offset=".75" stop-color="#0b322f"/><stop offset="1" stop-color="#0a312e"/></linearGradient><linearGradient id="gb1" gradientUnits="userSpaceOnUse" x1="921" y1="0" x2="1218" y2="0"><stop offset="0" stop-color="#0e3f3c"/><stop offset=".5" stop-color="#0c3835"/><stop offset=".5" stop-color="#0c3734"/><stop offset=".75" stop-color="#0b3533"/><stop offset="1" stop-color="#0b3431"/></linearGradient><linearGradient id="gb2" gradientUnits="userSpaceOnUse" x1="921" y1="0" x2="1218" y2="0"><stop offset="0" stop-color="#0f443f"/><stop offset=".5" stop-color="#0d3d39"/><stop offset=".5" stop-color="#0d3b37"/><stop offset=".75" stop-color="#0c3a36"/><stop offset="1" stop-color="#0c3834"/></linearGradient><linearGradient id="gb3" gradientUnits="userSpaceOnUse" x1="921" y1="0" x2="1218" y2="0"><stop offset="0" stop-color="#104a44"/><stop offset=".5" stop-color="#0e443f"/><stop offset=".5" stop-color="#0e423d"/><stop offset=".75" stop-color="#0d403b"/><stop offset="1" stop-color="#0c3d39"/></linearGradient><linearGradient id="gb4" gradientUnits="userSpaceOnUse" x1="921" y1="0" x2="1218" y2="0"><stop offset="0" stop-color="#11524c"/><stop offset=".5" stop-color="#104d47"/><stop offset=".5" stop-color="#0f4a44"/><stop offset=".75" stop-color="#0f4742"/><stop offset="1" stop-color="#0e443f"/></linearGradient><linearGradient id="gb5" gradientUnits="userSpaceOnUse" x1="921" y1="0" x2="1218" y2="0"><stop offset="0" stop-color="#145c55"/><stop offset=".5" stop-color="#135851"/><stop offset=".5" stop-color="#12544e"/><stop offset=".75" stop-color="#11504a"/><stop offset="1" stop-color="#104c46"/></linearGradient><linearGradient id="gb6" gradientUnits="userSpaceOnUse" x1="921" y1="0" x2="1218" y2="0"><stop offset="0" stop-color="#186960"/><stop offset=".5" stop-color="#17665e"/><stop offset=".5" stop-color="#16615a"/><stop offset=".75" stop-color="#155c55"/><stop offset="1" stop-color="#135650"/></linearGradient><radialGradient id="gd" gradientUnits="userSpaceOnUse" cx="1040" cy="430" r="230"><stop offset="0" stop-color="#219186"/><stop offset=".45" stop-color="#1d897d"/><stop offset="1" stop-color="#167267"/></radialGradient></defs>
<path d="M1127.6 626.8 L1155.2 651.9 M1127.6 626.8 L1078.9 641.4 M1127.6 626.8 L1127.0 550.7 M1124.6 235.0 L1153.2 258.3 M1124.6 235.0 L1074.2 248.4 M1124.6 235.0 L1125.2 315.7" stroke="#fff" stroke-width="1.7" fill="none" stroke-linecap="round"/>
<g><polygon points="1023.8,653.3 1024.1,649.3 1025.7,645.3 1028.4,641.6 1032.2,638.0 1037.0,634.9 1042.7,632.1 1049.1,629.9 1056.0,628.2 1063.4,627.0 1071.0,626.5 1078.7,626.6 1086.2,627.3 1093.3,628.6 1100.0,630.5 1106.0,632.9 1111.3,635.8 1115.5,639.0 1118.8,642.6 1120.9,646.5 1121.8,650.4 1122.5,726.5 1122.2,730.5 1120.7,734.6 1118.1,738.4 1114.4,742.0 1109.7,745.3 1104.0,748.1 1097.7,750.4 1090.7,752.2 1083.3,753.4 1075.6,754.0 1067.9,753.9 1060.4,753.1 1053.2,751.8 1046.5,749.8 1040.5,747.3 1035.3,744.4 1031.1,741.0 1027.9,737.3 1025.9,733.4 1025.1,729.4" fill="url(#gc1)" stroke="none" stroke-width="0.5"/>
<polygon points="1023.8,653.3 1024.1,649.3 1025.7,645.3 1028.4,641.6 1032.2,638.0 1037.0,634.9 1042.7,632.1 1049.1,629.9 1056.0,628.2 1063.4,627.0 1071.0,626.5 1078.7,626.6 1086.2,627.3 1093.3,628.6 1100.0,630.5 1106.0,632.9 1111.3,635.8 1115.5,639.0 1118.8,642.6 1120.9,646.5 1121.8,650.4 1121.6,654.4 1120.1,658.4 1117.5,662.2 1113.7,665.8 1109.0,669.0 1103.3,671.8 1096.9,674.1 1089.8,675.8 1082.4,677.0 1074.7,677.5 1066.9,677.4 1059.3,676.7 1052.1,675.4 1045.3,673.5 1039.3,671.0 1034.1,668.1 1029.8,664.7 1026.6,661.1 1024.6,657.2" fill="#1e8478" stroke="#1e8478" stroke-width="0.5"/>
<polygon points="1028.6,613.7 1028.9,610.1 1030.3,606.7 1032.7,603.4 1036.1,600.3 1040.4,597.5 1045.4,595.0 1051.1,593.1 1057.3,591.5 1063.9,590.5 1070.7,590.1 1077.5,590.2 1084.2,590.8 1090.6,591.9 1096.6,593.6 1102.0,595.7 1106.6,598.3 1110.4,601.2 1113.3,604.3 1115.2,607.7 1116.0,611.2 1116.4,650.6 1116.1,654.1 1114.8,657.7 1112.5,661.0 1109.1,664.2 1104.9,667.0 1099.9,669.5 1094.2,671.6 1087.9,673.1 1081.3,674.2 1074.5,674.6 1067.6,674.6 1060.8,673.9 1054.4,672.7 1048.4,671.0 1043.0,668.8 1038.4,666.2 1034.6,663.3 1031.8,660.1 1030.0,656.6 1029.2,653.1" fill="url(#gc2)" stroke="none" stroke-width="0.5"/>
<polygon points="1005.7,588.0 1006.2,582.7 1008.3,577.5 1012.0,572.5 1017.2,567.9 1023.7,563.7 1031.3,560.0 1040.0,557.1 1049.3,554.8 1059.3,553.3 1069.5,552.6 1079.8,552.7 1090.0,553.7 1099.6,555.4 1108.7,557.9 1116.8,561.1 1123.8,564.9 1129.6,569.2 1134.0,574.0 1136.9,579.0 1138.2,584.3 1138.4,610.6 1138.1,615.9 1136.1,621.2 1132.6,626.3 1127.5,631.0 1121.1,635.3 1113.5,639.0 1104.8,642.1 1095.3,644.5 1085.2,646.0 1074.8,646.8 1064.3,646.7 1054.1,645.7 1044.3,643.9 1035.2,641.3 1027.0,638.0 1020.0,634.1 1014.3,629.6 1010.0,624.8 1007.3,619.6 1006.2,614.3" fill="url(#gc3)" stroke="none" stroke-width="0.5"/>
<polygon points="1005.7,588.0 1006.2,582.7 1008.3,577.5 1012.0,572.5 1017.2,567.9 1023.7,563.7 1031.3,560.0 1040.0,557.1 1049.3,554.8 1059.3,553.3 1069.5,552.6 1079.8,552.7 1090.0,553.7 1099.6,555.4 1108.7,557.9 1116.8,561.1 1123.8,564.9 1129.6,569.2 1134.0,574.0 1136.9,579.0 1138.2,584.3 1137.9,589.6 1135.9,594.9 1132.4,599.9 1127.3,604.7 1120.9,608.9 1113.2,612.7 1104.5,615.7 1095.0,618.1 1084.9,619.6 1074.5,620.4 1064.0,620.2 1053.7,619.2 1043.9,617.5 1034.8,614.9 1026.6,611.6 1019.5,607.7 1013.8,603.3 1009.5,598.5 1006.8,593.3" fill="#1e8478" stroke="#1e8478" stroke-width="0.5"/>
<polygon points="1016.3,495.9 1016.7,491.6 1018.5,487.4 1021.5,483.4 1025.7,479.7 1031.1,476.4 1037.4,473.4 1044.5,471.1 1052.2,469.2 1060.4,468.0 1068.8,467.5 1077.3,467.6 1085.6,468.3 1093.6,469.7 1101.0,471.7 1107.7,474.3 1113.5,477.4 1118.3,480.8 1121.9,484.7 1124.2,488.7 1125.3,492.9 1126.0,584.6 1125.7,589.0 1124.1,593.3 1121.2,597.4 1117.1,601.2 1111.8,604.7 1105.6,607.7 1098.5,610.2 1090.7,612.1 1082.5,613.4 1074.0,614.0 1065.5,613.9 1057.1,613.1 1049.1,611.6 1041.7,609.5 1035.0,606.9 1029.3,603.7 1024.6,600.1 1021.1,596.2 1018.9,592.0 1017.9,587.7" fill="url(#gc4)" stroke="none" stroke-width="0.5"/>
<polygon points="994.1,493.5 994.7,489.5 996.1,485.6 998.4,481.7 1001.5,478.0 1005.3,474.5 1009.8,471.1 1015.0,468.1 1020.7,465.3 1027.0,462.8 1033.8,460.6 1041.0,458.9 1048.4,457.4 1056.2,456.4 1064.0,455.8 1072.0,455.6 1079.9,455.8 1087.7,456.4 1095.4,457.4 1102.8,458.8 1109.8,460.6 1116.5,462.7 1122.6,465.2 1128.2,468.0 1133.2,471.0 1137.5,474.4 1141.1,477.9 1143.9,481.6 1145.9,485.4 1147.1,489.4 1147.5,493.4 1147.1,497.4 1145.8,501.3 1143.7,505.2 1140.7,509.0 1137.0,512.6 1132.6,516.0 1127.4,519.2 1121.7,522.0 1115.3,524.6 1108.5,526.9 1101.2,528.7 1093.6,530.2 1085.8,531.2 1077.7,531.9 1069.6,532.1 1061.5,531.9 1053.5,531.3 1045.7,530.2 1038.2,528.8 1031.1,526.9 1024.4,524.7 1018.2,522.2 1012.6,519.3 1007.6,516.1 1003.4,512.8 999.9,509.1 997.2,505.4 995.3,501.5 994.3,497.5" fill="url(#gb0)" stroke="none" stroke-width="0.5"/>
<polygon points="972.6,477.4 973.4,472.4 975.3,467.4 978.2,462.5 982.2,457.8 987.0,453.3 992.8,449.1 999.4,445.1 1006.8,441.6 1014.8,438.5 1023.5,435.8 1032.6,433.5 1042.1,431.7 1052.0,430.4 1062.0,429.6 1072.1,429.4 1082.2,429.6 1092.2,430.4 1101.9,431.7 1111.3,433.4 1120.3,435.7 1128.8,438.4 1136.6,441.5 1143.8,445.0 1150.1,448.9 1155.6,453.1 1160.2,457.6 1163.8,462.3 1166.5,467.2 1168.0,472.2 1168.6,477.3 1168.0,482.4 1166.4,487.4 1163.7,492.4 1160.0,497.1 1155.3,501.8 1149.6,506.1 1143.1,510.1 1127.4,519.2 1121.7,522.0 1115.3,524.6 1108.5,526.9 1101.2,528.7 1093.6,530.2 1085.8,531.2 1077.7,531.9 1069.6,532.1 1061.5,531.9 1053.5,531.3 1045.7,530.2 1038.2,528.8 1031.1,526.9 1024.4,524.7 1018.2,522.2 1012.6,519.3 996.1,510.3 989.8,506.2 984.4,501.9 980.0,497.3 976.5,492.5 974.1,487.6 972.8,482.5" fill="url(#gb1)" stroke="none" stroke-width="0.5"/>
<polygon points="955.5,457.9 956.5,452.0 958.8,446.1 962.2,440.4 966.8,434.9 972.5,429.7 979.3,424.8 987.1,420.3 995.7,416.2 1005.1,412.6 1015.2,409.4 1025.9,406.8 1037.0,404.7 1048.5,403.2 1060.3,402.3 1072.1,402.0 1083.9,402.3 1095.6,403.2 1107.0,404.6 1118.0,406.7 1128.5,409.3 1138.4,412.5 1147.6,416.1 1155.9,420.2 1163.4,424.7 1169.8,429.6 1175.2,434.8 1179.5,440.3 1182.6,445.9 1184.5,451.8 1185.1,457.7 1184.5,463.6 1182.6,469.5 1179.5,475.3 1175.2,480.9 1160.0,497.1 1155.3,501.8 1149.6,506.1 1143.1,510.1 1135.7,513.8 1127.6,517.1 1118.9,519.9 1109.6,522.3 1099.8,524.2 1089.8,525.5 1079.5,526.4 1069.1,526.7 1058.7,526.4 1048.5,525.6 1038.5,524.2 1028.9,522.4 1019.7,520.0 1011.1,517.2 1003.2,513.9 996.1,510.3 989.8,506.2 984.4,501.9 969.2,486.4 964.0,481.1 960.0,475.5 957.3,469.7 955.8,463.8" fill="url(#gb2)" stroke="none" stroke-width="0.5"/>
<polygon points="942.5,437.2 943.7,430.7 946.2,424.3 950.0,418.0 955.2,411.9 961.6,406.2 969.1,400.8 977.7,395.8 987.3,391.3 997.7,387.3 1009.0,383.8 1020.8,380.9 1033.2,378.6 1045.9,377.0 1058.9,376.0 1072.0,375.6 1085.1,376.0 1098.0,376.9 1110.7,378.6 1122.9,380.9 1134.5,383.7 1145.5,387.2 1155.7,391.2 1165.0,395.7 1173.3,400.7 1180.5,406.1 1186.5,411.8 1191.3,417.8 1194.7,424.1 1196.8,430.5 1197.5,437.1 1196.9,443.6 1194.8,450.1 1191.4,456.5 1179.5,475.3 1175.2,480.9 1169.7,486.2 1163.0,491.3 1155.4,496.0 1146.8,500.3 1137.3,504.1 1127.0,507.5 1116.1,510.3 1104.7,512.5 1092.9,514.1 1080.8,515.0 1068.6,515.4 1056.4,515.1 1044.4,514.1 1032.6,512.5 1021.3,510.4 1010.6,507.6 1000.5,504.3 991.3,500.5 982.9,496.2 975.5,491.5 969.2,486.4 964.0,481.1 960.0,475.5 947.5,456.7 944.4,450.3 942.8,443.8" fill="url(#gb3)" stroke="none" stroke-width="0.5"/>
<polygon points="932.0,414.1 933.3,407.1 936.0,400.1 940.2,393.4 945.8,386.9 952.7,380.8 960.8,375.0 970.1,369.6 980.5,364.8 991.8,360.5 1003.9,356.8 1016.6,353.7 1030.0,351.3 1043.7,349.5 1057.8,348.4 1071.9,348.1 1086.0,348.4 1100.0,349.5 1113.6,351.2 1126.8,353.6 1139.3,356.7 1151.2,360.4 1162.2,364.7 1172.2,369.6 1181.2,374.9 1188.9,380.6 1195.4,386.8 1200.6,393.3 1204.3,400.0 1206.6,406.9 1207.4,413.9 1206.7,420.9 1204.5,427.9 1194.8,450.1 1191.4,456.5 1186.6,462.7 1180.5,468.6 1173.1,474.2 1164.6,479.4 1155.0,484.2 1144.5,488.4 1133.1,492.1 1121.0,495.2 1108.3,497.6 1095.1,499.4 1081.7,500.5 1068.1,500.9 1054.5,500.5 1041.2,499.5 1028.1,497.7 1015.6,495.3 1003.6,492.2 992.4,488.6 982.1,484.4 972.9,479.6 964.7,474.4 957.6,468.8 951.9,462.9 947.5,456.7 944.4,450.3 934.1,428.1 932.3,421.1" fill="url(#gb4)" stroke="none" stroke-width="0.5"/>
<polygon points="924.6,388.8 925.9,381.5 928.8,374.3 933.2,367.2 939.1,360.5 946.4,354.1 954.9,348.0 964.7,342.5 975.6,337.4 987.5,332.9 1000.2,329.1 1013.6,325.8 1027.7,323.3 1042.1,321.5 1056.8,320.4 1071.7,320.0 1086.5,320.3 1101.2,321.4 1115.5,323.3 1129.3,325.8 1142.5,329.0 1155.0,332.9 1166.6,337.3 1177.1,342.4 1186.5,347.9 1194.7,353.9 1201.5,360.4 1207.0,367.1 1210.9,374.1 1213.3,381.3 1214.2,388.6 1213.5,396.0 1206.7,420.9 1204.5,427.9 1200.8,434.7 1195.6,441.4 1189.1,447.8 1181.1,453.8 1172.0,459.4 1161.6,464.5 1150.2,469.1 1137.9,473.0 1124.8,476.3 1111.1,479.0 1096.9,480.9 1082.3,482.0 1067.6,482.4 1053.0,482.0 1038.5,480.9 1024.4,479.0 1010.8,476.4 997.9,473.1 985.8,469.2 974.7,464.7 964.7,459.6 955.8,454.0 948.3,448.0 942.1,441.6 937.4,434.9 934.1,428.1 926.7,403.4 924.9,396.1" fill="url(#gb5)" stroke="none" stroke-width="0.5"/>
<polygon points="921.2,362.9 922.6,355.5 925.5,348.2 930.0,341.1 936.0,334.2 943.5,327.7 952.2,321.6 962.2,316.0 973.3,310.8 985.5,306.3 998.4,302.4 1012.2,299.1 1026.5,296.6 1041.2,294.7 1056.2,293.6 1071.4,293.2 1086.5,293.6 1101.5,294.7 1116.1,296.5 1130.2,299.1 1143.7,302.4 1156.4,306.3 1168.2,310.8 1179.0,315.9 1188.6,321.5 1197.0,327.6 1204.0,334.1 1209.5,341.0 1213.5,348.1 1216.0,355.4 1216.9,362.8 1216.2,370.2 1213.5,396.0 1211.2,403.2 1207.3,410.4 1201.9,417.4 1195.0,424.0 1186.6,430.3 1177.0,436.2 1166.1,441.5 1154.1,446.3 1141.2,450.4 1127.4,453.9 1112.9,456.6 1098.0,458.6 1082.7,459.8 1067.2,460.2 1051.8,459.9 1036.5,458.7 1021.7,456.7 1007.4,454.0 993.8,450.5 981.1,446.4 969.4,441.7 958.9,436.3 949.6,430.5 941.6,424.2 935.1,417.5 930.1,410.6 926.7,403.4 924.9,396.1 921.5,370.3" fill="url(#gb6)" stroke="none" stroke-width="0.5"/>
<polygon points="998.4,302.4 987.6,305.6 977.3,309.3 967.6,313.3 958.8,317.8 950.7,322.6 943.5,327.7 937.2,333.1 931.9,338.7 927.6,344.6 924.4,350.6 922.2,356.7 921.2,362.9 921.3,369.1 922.5,375.3 924.9,381.4 928.4,387.4 932.9,393.2 938.6,398.8 945.2,404.1 952.8,409.2 961.4,413.9 970.8,418.2 981.0,422.1 991.9,425.5 1003.4,428.5 1015.4,430.9 1027.9,432.9 1040.6,434.2 1053.7,435.1 1066.8,435.4 1080.0,435.1 1093.0,434.2 1105.9,432.8 1118.5,430.9 1130.7,428.4 1142.4,425.4 1153.5,422.0 1163.9,418.1 1173.5,413.7 1182.4,409.0 1190.3,404.0 1197.3,398.6 1203.3,393.0 1208.2,387.2 1212.0,381.2 1214.8,375.1 1216.4,369.0 1216.9,362.8 1216.3,356.6 1214.6,350.5 1211.7,344.5 1207.8,338.7 1202.9,333.0 1197.0,327.6 1190.1,322.5 1182.4,317.7 1173.8,313.3 1164.4,309.2 1154.4,305.6 1143.7,302.4 1132.5,299.6 1120.9,297.3 1108.8,295.5 1096.5,294.2 1084.0,293.5 1071.4,293.2 1058.8,293.5 1046.2,294.2 1033.8,295.5 1021.6,297.3 1009.8,299.6" fill="url(#gd)"/>
<g transform="rotate(0 1063.8 293.6)"><ellipse cx="1063.8" cy="295.4" rx="11.0" ry="3.2" fill="#0f6058"/><ellipse cx="1063.8" cy="293.0" rx="10.6" ry="2.4" fill="#188075"/></g>
<g transform="rotate(-8 1014.2 302.2)"><ellipse cx="1014.2" cy="304.0" rx="11.0" ry="4.4" fill="#0f6159"/><ellipse cx="1014.2" cy="301.6" rx="10.6" ry="3.6" fill="#198176"/></g>
<g transform="rotate(3 1090.9 302.8)"><ellipse cx="1090.9" cy="304.6" rx="11.0" ry="4.4" fill="#0f6159"/><ellipse cx="1090.9" cy="302.2" rx="10.6" ry="3.6" fill="#198176"/></g>
<g transform="rotate(14 1140.5 303.1)"><ellipse cx="1140.5" cy="304.9" rx="10.6" ry="3.9" fill="#0f6159"/><ellipse cx="1140.5" cy="302.5" rx="10.2" ry="3.1" fill="#198176"/></g>
<g transform="rotate(-3 1041.3 311.6)"><ellipse cx="1041.3" cy="313.4" rx="11.0" ry="5.7" fill="#10625a"/><ellipse cx="1041.3" cy="311.0" rx="10.6" ry="4.9" fill="#198377"/></g>
<g transform="rotate(-16 964.8 320.5)"><ellipse cx="964.8" cy="322.3" rx="11.0" ry="5.3" fill="#10635b"/><ellipse cx="964.8" cy="319.9" rx="10.6" ry="4.5" fill="#1a8479"/></g>
<g transform="rotate(6 1119.1 321.4)"><ellipse cx="1119.1" cy="323.2" rx="11.0" ry="6.2" fill="#10645b"/><ellipse cx="1119.1" cy="320.8" rx="10.6" ry="5.4" fill="#1a8479"/></g>
<g transform="rotate(20 1168.6 321.4)"><ellipse cx="1168.6" cy="323.2" rx="10.6" ry="5.7" fill="#10645b"/><ellipse cx="1168.6" cy="320.8" rx="10.2" ry="4.9" fill="#1a8479"/></g>
<g transform="rotate(-10 991.4 330.2)"><ellipse cx="991.4" cy="332.0" rx="11.0" ry="6.7" fill="#10655c"/><ellipse cx="991.4" cy="329.6" rx="10.6" ry="5.9" fill="#1b857a"/></g>
<g transform="rotate(0 1069.3 331.1)"><ellipse cx="1069.3" cy="332.9" rx="11.0" ry="6.7" fill="#10655c"/><ellipse cx="1069.3" cy="330.5" rx="10.6" ry="5.9" fill="#1b857a"/></g>
<g transform="rotate(-6 1018.6 349.2)"><ellipse cx="1018.6" cy="351.0" rx="11.0" ry="8.0" fill="#11675e"/><ellipse cx="1018.6" cy="348.6" rx="10.6" ry="7.2" fill="#1c887d"/></g>
<g transform="rotate(10 1147.4 350.0)"><ellipse cx="1147.4" cy="351.8" rx="11.0" ry="8.0" fill="#11675e"/><ellipse cx="1147.4" cy="349.4" rx="10.6" ry="7.2" fill="#1c887d"/></g>
<g transform="rotate(26 1196.8 350.6)"><ellipse cx="1196.8" cy="352.4" rx="10.6" ry="7.1" fill="#11675e"/><ellipse cx="1196.8" cy="350.0" rx="10.2" ry="6.3" fill="#1d887d"/></g>
<g transform="rotate(-22 941.3 358.0)"><ellipse cx="941.3" cy="359.8" rx="11.0" ry="7.4" fill="#11685f"/><ellipse cx="941.3" cy="357.4" rx="10.6" ry="6.6" fill="#1d897e"/></g>
<g transform="rotate(4 1097.1 359.1)"><ellipse cx="1097.1" cy="360.9" rx="11.0" ry="8.3" fill="#11685f"/><ellipse cx="1097.1" cy="358.5" rx="10.6" ry="7.5" fill="#1d897e"/></g>
<g transform="rotate(-15 968.5 376.8)"><ellipse cx="968.5" cy="378.6" rx="11.0" ry="8.9" fill="#126b61"/><ellipse cx="968.5" cy="376.2" rx="10.6" ry="8.1" fill="#1f8c80"/></g>
<g transform="rotate(-3 1046.6 377.7)"><ellipse cx="1046.6" cy="379.5" rx="11.0" ry="9.2" fill="#126b61"/><ellipse cx="1046.6" cy="377.1" rx="10.6" ry="8.4" fill="#1f8c80"/></g>
<g transform="rotate(20 1175.7 388.1)"><ellipse cx="1175.7" cy="389.9" rx="11.0" ry="9.7" fill="#126c62"/><ellipse cx="1175.7" cy="387.5" rx="10.6" ry="8.9" fill="#1f8d82"/></g>
<g transform="rotate(10 1125.4 397.0)"><ellipse cx="1125.4" cy="398.8" rx="11.0" ry="10.3" fill="#126d63"/><ellipse cx="1125.4" cy="396.4" rx="10.6" ry="9.5" fill="#208f83"/></g>
<g transform="rotate(-10 996.5 406.0)"><ellipse cx="996.5" cy="407.8" rx="11.0" ry="10.3" fill="#136e64"/><ellipse cx="996.5" cy="405.4" rx="10.6" ry="9.5" fill="#219084"/></g>
<g transform="rotate(0 1075.3 416.1)"><ellipse cx="1075.3" cy="417.9" rx="11.0" ry="11.0" fill="#137066"/><ellipse cx="1075.3" cy="415.5" rx="10.6" ry="10.2" fill="#229185"/></g></g>
<path d="M1269.6 755.5 L1240.4 729.1 M1269.6 755.5 L1219.9 771.1 M1269.6 755.5 L1270.0 677.7 M1271.8 354.7 L1241.5 330.1 M1271.8 354.7 L1220.3 369.1 M1271.8 354.7 L1271.4 437.3 M1017.0 834.7 L989.0 807.2 M1017.0 834.7 L1068.4 818.6 M1017.0 834.7 L1015.6 755.8 M1009.6 428.0 L980.6 402.3 M1009.6 428.0 L1063.0 413.1 M1009.6 428.0 L1011.1 511.8 M880.5 700.7 L907.0 726.8 M880.5 700.7 L930.7 685.7 M880.5 700.7 L878.1 623.5 M868.3 303.2 L895.8 327.5 M868.3 303.2 L920.4 289.3 M868.3 303.2 L870.8 385.1" stroke="#fff" stroke-width="1.7" fill="none" stroke-linecap="round"/>
<g opacity=".97">
<polygon points="517.2,942.3 586.1,922.2 627.0,953.0 557.6,974.2" fill="#cbcbcb"/>
<polygon points="517.2,942.3 557.6,974.2 556.7,1044.6 517.2,1009.0" fill="#cfcfcf"/>
<polygon points="557.6,974.2 627.0,953.0 627.0,1025.5 556.7,1044.6" fill="#c6c6c6"/>
</g>
<g opacity=".32">
<path d="M627 1025.5 L589 992" stroke="#e06a6a" stroke-width="2.4" fill="none"/>
<polygon points="582.0,986.5 592.8,989.3 587.3,996.8" fill="#e06a6a"/>
<text x="569.5" y="987.5" font-size="13.5" fill="#e06a6a" font-family="Liberation Sans, sans-serif">x</text>
</g>
<path d="M535.8 936.9 L576.3 968.5 M528.1 950.9 L597.1 930.5 M528.1 950.9 L527.9 1018.6 M517.2 960.3 L557.4 993.2 M576.3 968.5 L575.7 1039.4 M557.4 993.2 L627.0 972.6 M567.5 927.6 L608.3 958.7 M546.7 965.6 L616.0 944.7 M546.7 965.6 L546.0 1035.0 M517.2 991.0 L556.9 1025.6 M608.3 958.7 L608.0 1030.7 M556.9 1025.6 L627.0 1005.9" stroke="#b4b4b4" stroke-width=".7" stroke-dasharray="2.5 2" fill="none" opacity=".8"/>
<text transform="matrix(0.956 -0.292 -0.013 1.000 573.8 1011.0)" font-size="14" font-style="italic" fill="#3e3e3e" font-family="Liberation Sans, sans-serif">Слева</text>
<text transform="matrix(0.487 0.384 0.000 1.000 526.5 989.0)" font-size="14" font-style="italic" fill="#3e3e3e" font-family="Liberation Sans, sans-serif">Сзади</text>
<text transform="matrix(-0.527 -0.397 0.864 -0.252 589.5 957.0)" font-size="14" font-style="italic" fill="#3e3e3e" font-family="Liberation Sans, sans-serif">Сверху</text>
<path d="M627 1026.5 L627 962" stroke="#8585cc" stroke-width="2.6" fill="none"/>
<polygon points="627.0,950.5 621.2,963.3 632.8,963.3" fill="#8585cc"/>
<text x="622" y="942.5" font-size="13.5" fill="#8585cc" font-family="Liberation Sans, sans-serif">z</text>
<path d="M627.5 1025.5 L563 1044" stroke="#7cc87c" stroke-width="2.6" fill="none"/>
<polygon points="552.2,1047.2 562.2,1038.0 565.4,1049.3" fill="#7cc87c"/>
<text x="531.5" y="1057.5" font-size="13.5" fill="#7cc87c" font-family="Liberation Sans, sans-serif">y</text></svg><div class="abs" style="left:0;top:1px;width:32px;height:32px;background:#fafafa"></div>
<svg class="ic" style="left:5.500px;top:3.300px" width="22" height="22" viewBox="0 0 22 22"><path d="M7.500 2.500L1.800 8l5.700 5.500M13.500 10.500l5.700 5.500-5.700 5.500" style="stroke:#2f3638;stroke-width:1.500"/></svg>
<div id="tool">
<svg style="left:8.3px" width="38" height="39" viewBox="0 0 38 39"><path d="M19.200 .7L37.300 7.900 19.200 15.400 1.100 7.900zM1.100 7.900V29.600L19.200 36.800V15.400M37.300 7.900V21.300M19.200 36.800h2"/><rect x="25" y="25" width="12.400" height="12.200" rx="1.500"/><path d="M31.200 27.400v7.400M27.500 31.100h7.400"/></svg>
<svg style="left:60.7px" width="38" height="39" viewBox="0 0 38 39"><path d="M21.200 37.200H2.100A1.500 1.500 0 0 1 .6 35.700V2.200A1.500 1.500 0 0 1 2.100 .7H35.500A1.500 1.500 0 0 1 37 2.200V21.300"/><path d="M10.300 3v31.500M18.700 3v31.500M27.300 3v18.300M2.900 10.700h31.500M2.900 19h31.500M2.900 27.100h18.300" style="stroke-width:1.500"/><rect x="24.700" y="25" width="12.300" height="12.200" rx="1.500"/><path d="M30.900 27.400v7.400M27.200 31.100h7.400"/></svg>
<svg style="left:112.7px" width="38" height="39" viewBox="0 0 38 39"><path d="M21 1L36.800 16.800 21 32.500 5.300 16.800z"/><path d="M16.200 21.300v-5.400a4.900 4.900 0 0 1 9.800 0v5.400M16.200 16.800h9.800"/><path d="M8.200 23.600L2.500 33.400M.7 27.600l1.800 5.800 6.800-2.300M.2 36.800h37"/></svg>
<svg style="left:164.3px" width="38" height="39" viewBox="0 0 38 39"><rect x=".9" y=".7" width="36.500" height="36.500" rx="2"/><rect x="4.700" y="4.700" width="16.300" height="6.900" rx="3.450"/><rect x="24" y="4.500" width="9.700" height="16.500" rx="1.500"/><circle cx="8.200" cy="17.900" r="3.100"/><circle cx="17.900" cy="17.900" r="3.100"/><rect x="4.700" y="24.200" width="28.900" height="8.800" rx="1.500"/></svg>
<svg style="left:224.3px" width="38" height="39" viewBox="0 0 38 39"><circle cx="8.100" cy="8.300" r="7.200"/><circle cx="30" cy="8.300" r="7.200"/><circle cx="8.100" cy="29.900" r="7.200"/><circle cx="30" cy="29.900" r="7.200"/><path d="M19.100 .8v37M.3 19.300h37" style="stroke-dasharray:5.500 2.200;stroke-linecap:butt"/></svg>
<svg style="left:276.7px" width="38" height="39" viewBox="0 0 38 39"><path d="M15 1.300H8.600a8 8 0 0 0-8 8v6.100H15zM22.100 1.300h6.700a8 8 0 0 1 8 8v6.100H22.100zM15 37.200H8.600a8 8 0 0 1-8-8v-6.300H15zM22.100 37.200h6.700a8 8 0 0 0 8-8v-6.300H22.100z"/><path d="M18.500 .8v37M.3 19.300h37" style="stroke-dasharray:5.500 2.200;stroke-linecap:butt"/></svg>
<svg style="left:328.3px" width="38" height="39" viewBox="0 0 38 39"><rect x="1" y=".8" width="36.300" height="2.800" rx="1.400"/><rect x="1" y="6.800" width="36.300" height="4.300" rx="2.150"/><rect x="1" y="14.600" width="36.300" height="4.400" rx="2.200"/><rect x="1" y="22.700" width="36.300" height="5.900" rx="2.900"/><rect x="1" y="32.500" width="36.300" height="4.700" rx="2.350"/></svg>
<svg style="left:412.3px" width="38" height="39" viewBox="0 0 38 39"><rect x="12.200" y="12.200" width="14" height="13.800" rx="1.500"/><path d="M19.200 10.700V1.300M14.500 6l4.700-4.700L23.900 6M10.300 19.300H.9M5.600 14.600L.9 19.300 5.600 24M28.300 19.300h8.900M32.600 14.600l4.600 4.700-4.600 4.700M19.200 27.900v9.300M14.500 32.500l4.700 4.700 4.700-4.700"/></svg>
<svg style="left:465.0px" width="38" height="39" viewBox="0 0 38 39"><path d="M3 9.300A18.300 18.300 0 1 1 18.100 37.600"/><path d="M18.100 37.600A18.300 18.300 0 0 1 .2 21" style="stroke-dasharray:3.500 2.500"/><path d="M2.400 3.300V9.400H9.200"/><rect x="11.500" y="12.200" width="13.800" height="13.800" rx="1.500"/></svg>
<svg style="left:516.7px" width="38" height="39" viewBox="0 0 38 39"><path d="M.3 6V.8H5.500M.3 .8L8.900 9M32 .8h5.300V6M37.300 .8L28.700 9M.3 32v5.100H5.500M.3 37.100L8.900 29M32 37.100h5.300V32M37.300 37.100L28.700 29"/><path d="M8 .8H30M8 37.100H30M.3 8.500V30M37.300 8.500V30" style="stroke-dasharray:3 2.600"/><rect x="11.600" y="12.100" width="14.500" height="13.800" rx="1.500"/></svg>
<svg style="left:568.3px" width="38" height="39" viewBox="0 0 38 39"><path d="M21.600 1.100L37.400 16.800 21.600 32.400 5.800 16.800z"/><path d="M8.500 24.100L2.600 33.300M.9 27.200l1.700 6.100 7.200-2M.6 37h37"/></svg>
<svg style="left:620.7px" width="38" height="39" viewBox="0 0 38 39"><path d="M.6 15V2.600A1.500 1.500 0 0 1 2.100 1.100H35.400A1.500 1.500 0 0 1 36.900 2.600V15M.6 23.200V35.600A1.500 1.500 0 0 0 2.100 37.100H35.400A1.500 1.500 0 0 0 36.900 35.600V23.200"/><path d="M.6 19.100H36.900" style="stroke-dasharray:4.200 2.200"/></svg>
<svg style="left:672.7px" width="38" height="39" viewBox="0 0 38 39"><g style="stroke:#c9c9c9"><rect x="10" y="1.100" width="26.800" height="26.100" rx="1.500" style="stroke:#cfcfcf"/><rect x=".7" y="10.600" width="26.200" height="26.500" rx="1.500" style="stroke:#cfcfcf"/><rect x="11" y="11.700" width="15.200" height="14.900" rx="1" style="stroke:#c4c4c4;fill:#ececec"/><path d="M11.500 17l5-5M11.500 22l10-10M12 26.300L26 12.500M17 26.300l9-9M22 26.300l4-4" style="stroke:#c4c4c4"/></g></svg>
<svg style="left:725.0px" width="38" height="39" viewBox="0 0 38 39"><path d="M.6 37.100V2.600A1.500 1.500 0 0 1 2.100 1.100H35.100A1.500 1.500 0 0 1 36.600 2.600V17.800M.6 13h21.600v16.900M.6 37.100h10.800"/><path d="M3.300 13v24M5.700 13v24M8.200 13v24M10.900 13v24" style="stroke-width:1.050"/><path d="M36.600 30v6a1.100 1.100 0 0 1-1.100 1.100h-2.500" style="stroke-dasharray:3 2"/><path d="M36.200 23.200c.9 .6 .9 1.400 .4 2.100L31 33M34.700 22.500L29 30.300M29 30.300c-2-.3-3.300 .8-3.800 2.500-.4 1.500-1.200 2.600-2.700 3.600 3 .9 7 .3 8.300-2.200 .5-1.100 .6-2.300 .2-3.100zM36.200 23.200c-.6-.5-1.100-.9-1.500-.7" style="stroke-width:1.300"/></svg>
<svg style="left:776.7px" width="38" height="39" viewBox="0 0 38 39"><path d="M18.700 37.100H2.100A1.500 1.500 0 0 1 .6 35.600V2.600A1.500 1.500 0 0 1 2.100 1.100H35.500A1.500 1.500 0 0 1 37 2.600V17.800"/><path d="M10.2 3.0h.1M12.4 4.7h.1M10.2 6.4h.1M13.4 8.2h.1M11.2 9.9h.1M13.4 11.6h.1M10.2 13.3h.1M12.4 15.0h.1M10.2 16.8h.1M13.4 18.5h.1M11.2 20.2h.1M13.4 21.9h.1M10.2 23.6h.1M12.4 25.4h.1M10.2 27.1h.1M13.4 28.8h.1M11.2 30.5h.1M13.4 32.2h.1M10.2 34.0h.1" style="stroke-width:1.500"/><path d="M37 30v6a1.100 1.100 0 0 1-1.100 1.100h-2.500" style="stroke-dasharray:3 2"/><path d="M36.200 23.200c.9 .6 .9 1.400 .4 2.100L31 33M34.700 22.500L29 30.300M29 30.300c-2-.3-3.300 .8-3.800 2.500-.4 1.500-1.200 2.600-2.700 3.600 3 .9 7 .3 8.300-2.200 .5-1.100 .6-2.300 .2-3.100zM36.200 23.200c-.6-.5-1.100-.9-1.500-.7" style="stroke-width:1.300"/></svg>
<svg style="left:829.0px" width="38" height="39" viewBox="0 0 38 39"><path d="M36 2.700V8.500a1.500 1.500 0 0 1-1.500 1.500H23.300V34.100a1.500 1.500 0 0 1-1.500 1.500H16.400L14.800 34M2 8.700l1.600 1.500h9.700" style="stroke:#5a6163"/><path d="M1.900 1.100H33a1.500 1.500 0 0 1 1.500 1.500V7.200A1.500 1.500 0 0 1 33 8.700H21.700V32.500A1.500 1.500 0 0 1 20.200 34H14.800a1.500 1.500 0 0 1-1.500-1.500V8.700H1.900A1.500 1.500 0 0 1 .4 7.200V2.600A1.500 1.500 0 0 1 1.900 1.100z" style="fill:#fafafa"/></svg>
<svg style="left:881.0px" width="38" height="39" viewBox="0 0 38 39"><path d="M.5 5.600L14.300 1.100H29.200V4.200L36.700 4.900 28.600 8.300H.5zM.5 20.500H28.600L36.700 21.800 29.200 24.600V27.700H15L.5 23.200z"/><circle cx="6.200" cy="14.400" r="4.700"/><path d="M17 8.300V20.500M27.200 8.300V20.500M17 27.700V37.100M27.200 27.700V37.100M17 37.100h3M24.200 37.100h3"/><path d="M19 10.500h3.500M19 12.700h2.200M19 14.900h3.500M19 17.100h2.200M19 19.300h3.500M19 29.500h2.200M19 31.700h3.500M19 33.900h2.200" style="stroke-width:1"/></svg>
<svg style="left:965.0px" width="38" height="39" viewBox="0 0 38 39"><rect x=".4" y="1.900" width="36.200" height="36.200" rx="2.500"/><path d="M18.400 1.900V8.200c3.600-1.900 6.400 .2 6.400 2.700s-2.800 4.600-6.400 2.700V20.500M18.400 20.500V26.400c-3.600-1.900-6.400 .2-6.400 2.700s2.800 4.600 6.400 2.700V38.100M.4 20.500H6.700c-1.900-3.600 .2-6.400 2.700-6.400s4.600 2.800 2.700 6.400H18.400M18.400 20.500h6.200c-1.900 3.600 .2 6.400 2.700 6.400s4.600-2.800 2.700-6.400h6.600"/></svg>
<div class="sep" style="left:390.8px"></div>
<div class="sep" style="left:942.8px"></div>
</div>
<div id="info"></div>
<div id="infot">
<div class="t" style="top:872.18px;font-size:15.73px;left:972.91px;color:#1f1f1f;">Имя модели: Насадка массажер.stl</div>
<div class="t" style="top:889.93px;font-size:15.44px;left:972.93px;color:#1f1f1f;">Размер: 51.9772 x 51.9543 x 82.5 мм</div>
<div class="t" style="top:908.22px;font-size:15.1px;left:973.48px;color:#1f1f1f;">Объём: 50447.4 мм<span style="font-size:9px;position:relative;top:-5px">3</span></div>
<div class="t" style="top:944.07px;font-size:15.87px;left:973.84px;color:#1f1f1f;">Треугольников: 5904</div>
</div>
<div class="abs" style="left:1372.8px;top:870.5px;width:22.5px;height:22px;border-radius:3px;background:#e6ebe9"></div>
<svg class="ic" style="left:1377.5px;top:875px" width="13" height="13" viewBox="0 0 13 13"><path d="M.8 .8l11.400 11.400M12.200 .8L.8 12.200" style="stroke:#333;stroke-width:1.100"/></svg>
<div class="abs" style="left:1379.2px;top:944.3px;width:16px;height:15px;border-radius:3px;background:#e6ebe9"></div>
<div class="abs" style="left:1382.5px;top:951.3px;width:9px;height:1.300px;background:#555"></div>
<div id="wm">
<div class="t" style="top:866.74px;font-size:25.12px;left:929.15px;">Активация Windows</div>
<div class="t" style="top:901.99px;font-size:17.73px;left:927.81px;">Чтобы активировать Windows, перейдите в раздел</div>
<div class="t" style="top:926.29px;font-size:18.09px;left:928.43px;">"Параметры".</div>
</div></div>
</div>
</body></html>
